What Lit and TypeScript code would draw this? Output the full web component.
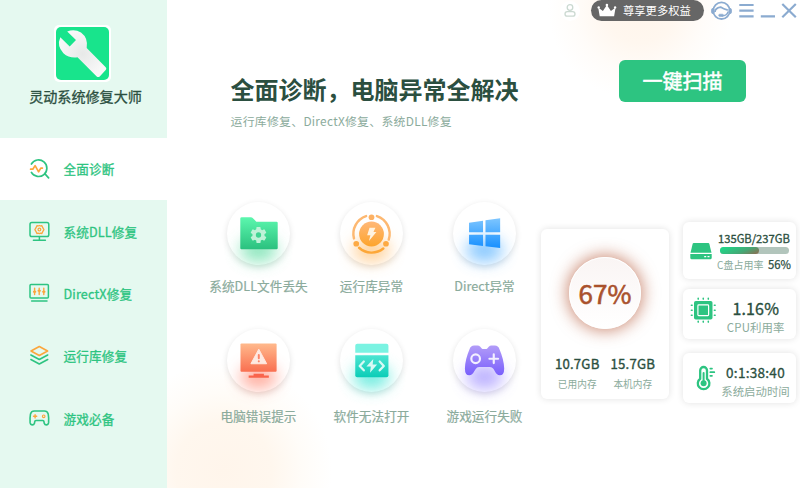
import { LitElement, html, css, svg, TemplateResult } from "lit";
import { customElement, property } from "lit/decorators.js";

const GREEN = "#2dc481";
const ORANGE = "#fba63c";

interface NavItem { label: string; icon: TemplateResult; active?: boolean }
interface Issue { label: string; glow: string; icon: TemplateResult }

const nav: NavItem[] = [
  {
    label: "全面诊断",
    active: true,
    icon: html`<svg viewBox="0 0 22 22"><g fill="none" stroke-width="1.7" stroke-linecap="round" stroke-linejoin="round">
      <path stroke=${GREEN} d="M3.400 6A8.300 8.300 0 1 1 3.400 14.400M17.200 16.200l3.400 3.600"/>
      <path stroke=${ORANGE} d="M2.600 11.200h2.200l2.300-3.600 3.500 6.200 2.200-3.700h1.600"/></g></svg>`,
  },
  {
    label: "系统DLL修复",
    icon: html`<svg viewBox="0 0 22 22"><g fill="none" stroke-width="1.5" stroke-linecap="round" stroke-linejoin="round">
      <rect x="2" y="1.600" width="18.800" height="14" rx="1.800" stroke=${GREEN}/>
      <path stroke=${GREEN} d="M11.400 16v3M5.400 19.200h12"/>
      <path stroke=${ORANGE} stroke-width="1.3" d="M8.900 4.700l1.200.3 1.300-.5 1.300.5 1.200-.3 1 2.200 1 1.700-1 1.700-1 2.200-1.200-.3-1.300.5-1.300-.5-1.200.3-1-2.200-1-1.700 1-1.700z"/>
      <circle cx="11.400" cy="8.600" r="1.400" stroke=${ORANGE} stroke-width="1.2"/></g></svg>`,
  },
  {
    label: "DirectX修复",
    icon: html`<svg viewBox="0 0 22 22"><g fill="none" stroke-width="1.5" stroke-linecap="round" stroke-linejoin="round">
      <rect x="2" y="1.600" width="18.400" height="13.400" rx="1" stroke=${GREEN}/>
      <path stroke=${GREEN} d="M3.600 18h15.400"/>
      <g stroke=${ORANGE} stroke-width="1.400"><path d="M6.600 5.200v6.300M11.200 5.200v6.300M15.800 5.200v6.300"/>
      <path stroke-width="2" d="M5.900 8.700h1.400M10.500 7.700h1.400M15.100 8.700h1.400"/></g></g></svg>`,
  },
  {
    label: "运行库修复",
    icon: html`<svg viewBox="0 0 22 22"><g fill="none" stroke-width="1.6" stroke-linecap="round" stroke-linejoin="round">
      <path stroke=${ORANGE} d="M11.300 1.500l8.300 4.500-8.300 4.500-8.300-4.500z"/>
      <path stroke=${GREEN} d="M2.900 10l8.400 4.500 8.400-4.500M2.900 14.500l8.400 4.500 8.400-4.500"/></g></svg>`,
  },
  {
    label: "游戏必备",
    icon: html`<svg viewBox="0 0 22 22"><g fill="none" stroke-width="1.6" stroke-linecap="round" stroke-linejoin="round">
      <path stroke=${GREEN} d="M6.300 3h10.100q2.900 0 3.800 2.900.8 4.600.4 8.800-.4 2.200-2.300 2.200-1.500 0-2.100-1.700-.1-2.700-1.500-2.700H8q-1.400 0-1.500 2.700-.6 1.700-2.100 1.700-1.900 0-2.300-2.200-.4-4.200.4-8.800Q3.400 3 6.300 3z"/>
      <path stroke=${ORANGE} stroke-width="1.4" d="M7.100 6.700v3.200M5.500 8.300h3.200"/>
      <circle cx="15.700" cy="8.300" r="1.300" stroke=${ORANGE} stroke-width="1.1"/></g></svg>`,
  },
];

const fade = (id: string, from: string, to: string) => svg`<defs><linearGradient id=${id} x1="0" y1="0" x2="0" y2="1">
  <stop offset="0" stop-color=${from}/><stop offset="1" stop-color=${to}/></linearGradient></defs>`;

/* Issue icons share a 64-unit square, the size of the disc they sit on. */
const issues: Issue[] = [
  {
    label: "系统DLL文件丢失",
    glow: "#6fe0ac",
    icon: html`<svg viewBox="0 0 64 64">${fade("folder", "#5cf7ae", "#2bc17f")}
      <path fill="url(#folder)" d="M15 15.500h9.500q.8 0 1.300.5l4 4h20.500q1.200 0 1.200 1.200v25.500q0 1.200-1.200 1.200H14.700q-1.200 0-1.200-1.200V16.700q0-1.200 1.500-1.200z"/>
      <g transform="translate(32 33.500)" fill="#bff2d8">
        ${[0, 60, 120].map((a) => svg`<rect x="-2.200" y="-8.100" width="4.400" height="16.200" rx=".8" transform=${`rotate(${a})`}/>`)}
        <circle r="6.200"/><circle r="2.700" fill="#40d492"/></g></svg>`,
  },
  {
    label: "运行库异常",
    glow: "#ffc680",
    icon: html`<svg viewBox="0 0 64 64">${fade("orbit", "#ffb878", "#fda42c")}
      <circle cx="32" cy="32.500" r="12.600" fill="url(#orbit)"/>
      <g fill="none" stroke-width="2.500" stroke-linecap="round">
        <path stroke="#fdb871" d="M37.500 14.300A19 19 0 0 1 49.500 38.200M26.500 14.300A19 19 0 0 0 14.200 37"/>
        <path stroke="#fda737" d="M19.400 46.500A19 19 0 0 0 44 47.300"/></g>
      <circle cx="32" cy="15.500" r="2.900" fill="#fdb163"/><circle cx="16.500" cy="42.400" r="2.900" fill="#fdaa43"/><circle cx="46.700" cy="42.400" r="2.900" fill="#fdaa43"/>
      <path fill="#fff3e0" d="M30 26.200h6l-2 4.300h3l-7.600 9.200 1.500-6h-3.300z"/></svg>`,
  },
  {
    label: "Direct异常",
    glow: "#69baff",
    icon: html`<svg viewBox="0 0 64 64"><defs><linearGradient id="panes" gradientUnits="userSpaceOnUse" x1="0" y1="17" x2="0" y2="47">
      <stop offset="0" stop-color="#7cc5ff"/><stop offset="1" stop-color="#168fff"/></linearGradient></defs>
      <path fill="url(#panes)" d="M16.300 21l14.200-2v11.700H16.300zM33 18.600l14.900-2.100v14.200H33zM16.300 33.200h14.200v11.400l-14.200-1.800zM33 33.200h14.900v13.600L33 44.900z"/></svg>`,
  },
  {
    label: "电脑错误提示",
    glow: "#ff9a88",
    icon: html`<svg viewBox="0 0 64 64">${fade("screen", "#ffb98c", "#f96f50")}
      <rect x="13.700" y="14.700" width="36.700" height="28.800" rx="1" fill="url(#screen)"/>
      <path fill="#f9644c" d="M27 45.500H37.500v1.700h5v2.300H22v-2.300h5z"/>
      <path fill="#fee9e1" stroke="#fee9e1" stroke-linejoin="round" d="M32.300 20.500l8 14.800h-16z"/>
      <path stroke="#fc8468" stroke-width="2" stroke-linecap="round" d="M32.300 26.500v3.300M32.300 32.800v.1"/></svg>`,
  },
  {
    label: "软件无法打开",
    glow: "#4fe8d8",
    icon: html`<svg viewBox="0 0 64 64">${fade("window", "#4ce5d2", "#0bcdb7")}
      <path fill="#7af3e2" d="M17.500 15h29.700q2 0 2 2v7.200H15.500V17q0-2 2-2z"/>
      <path fill="url(#window)" d="M15.500 26.700h33.700v20.300q0 2-2 2H17.500q-2 0-2-2z"/>
      <g fill="none" stroke="#d8faf5" stroke-width="2.300" stroke-linecap="round" stroke-linejoin="round">
      <path d="M24.200 33L20 37.500l4.200 4.500M40.300 33l4.200 4.500-4.200 4.500"/></g>
      <path fill="#d8faf5" d="M33.800 30.500l-.6 5.500h4.500l-7.200 8.500.8-6.500h-4.500z"/></svg>`,
  },
  {
    label: "游戏运行失败",
    glow: "#a89aff",
    icon: html`<svg viewBox="0 0 64 64">${fade("pad", "#b29cf8", "#795ffc")}
      <path fill="url(#pad)" d="M21.500 16.800h3.500q1.500 0 2.700 1.200l1.500 1.700q.7.700 1.600.7h2.400q.9 0 1.600-.7l1.500-1.700q1.200-1.200 2.700-1.200h3.500q3.500 0 4.700 3.700Q51.700 31 52 40q0 7-4.500 7-3 0-5-4l-1.300-2.400Q39.700 38.700 37.500 38.700h-11q-2.200 0-3.600 2.100L21.600 43q-2 4-5 4-4.500 0-4.500-7 .2-9 4.700-19.500 1.200-3.700 4.700-3.700z"/>
      <g fill="none" stroke="#f3efff" stroke-width="2.200"><circle cx="23" cy="30.200" r="4.400"/>
      <path stroke-linecap="round" d="M41.400 25.800v8.800M37 30.200h8.800"/></g></svg>`,
  },
];

const driveIcon = html`<svg viewBox="0 0 26 26"><path fill=${GREEN} d="M5.700 5h14.600q.8 0 1 .8l2.200 9H2.500l2.200-9q.2-.8 1-.8z"/>
  <path fill=${GREEN} d="M2.300 16h21.400v4.100q0 1.100-1.100 1.100H3.400q-1.100 0-1.100-1.100z"/><path stroke="#fff" stroke-width="1.300" d="M16.200 18.600h2M19.500 18.600h2"/></svg>`;

const chipIcon = html`<svg viewBox="0 0 26 26"><rect x="4" y="4" width="18.500" height="18.500" rx="1.800" fill=${GREEN}/>
  <rect x="7.900" y="7.900" width="10.700" height="10.700" rx=".8" fill="none" stroke="#fff" stroke-width="1.200"/>
  <path stroke=${GREEN} stroke-width="1.600" stroke-linecap="round" d="M8.200 1.400v.7M13.250 1.400v.7M18.300 1.400v.7M8.200 24.400v.7M13.250 24.400v.7M18.300 24.400v.7M1.400 8.200h.7M1.400 13.250h.7M1.400 18.300h.7M24.400 8.200h.7M24.400 13.250h.7M24.400 18.300h.7"/></svg>`;

const thermoIcon = html`<svg viewBox="0 0 26 26"><g fill="none" stroke=${GREEN} stroke-linecap="round">
  <path stroke-width="2.300" d="M7.200 13.700V5.400a3.400 3.400 0 0 1 6.800 0v8.300a5.800 5.800 0 1 1-6.800 0z"/>
  <path stroke-width="2" d="M10.600 8v8"/><path stroke-width="1.700" d="M17.300 3.600h1.700M17.300 7.200h4M17.300 10.800h1.700"/></g>
  <circle cx="10.600" cy="18.200" r="3" fill=${GREEN}/></svg>`;

@customElement("nav-entry")
class NavEntry extends LitElement {
  @property({ attribute: false }) item!: NavItem;
  static styles = css`
    :host { display: block; }
    .entry { box-sizing: border-box; height: 62.3px; padding: 1.500px 0 0 28px; display: flex; align-items: center; }
    .active { background: #fff; }
    .icon { width: 22px; height: 22px; margin-right: 13.500px; }
    .icon svg { display: block; width: 22px; height: 22px; }
    .label { font-size: 12.600px; letter-spacing: .15px; -webkit-text-stroke: .3px currentColor; color: #2dc481; line-height: 20px; white-space: nowrap; }
  `;
  render() {
    const { label, icon, active } = this.item;
    return html`<div class="entry ${active ? "active" : ""}"><span class="icon">${icon}</span><span class="label">${label}</span></div>`;
  }
}

@customElement("issue-tile")
class IssueTile extends LitElement {
  @property({ attribute: false }) issue!: Issue;
  @property({ type: Boolean }) low = false;
  static styles = css`
    :host { display: block; }
    .tile { display: flex; flex-direction: column; align-items: center; }
    .disc { position: relative; width: 63px; height: 63px; border-radius: 50%; background: #fff;
      box-shadow: 0 2px 6px rgba(0, 0, 0, .12); }
    .glow { position: absolute; left: 13px; top: 36px; width: 37px; height: 24px; border-radius: 50%; filter: blur(8px); opacity: .8; }
    .disc svg { position: relative; display: block; width: 63px; height: 63px; }
    .label { margin-top: 12.500px; font-size: 12.600px; letter-spacing: .06px; line-height: 18px; color: #8bab9c; -webkit-text-stroke: .2px currentColor; white-space: nowrap; }
    .low { margin-top: 15.500px; }
  `;
  render() {
    return html`<div class="tile"><div class="disc"><div class="glow" style="background:${this.issue.glow}"></div>${this.issue.icon}</div>
      <div class="label ${this.low ? "low" : ""}">${this.issue.label}</div></div>`;
  }
}

@customElement("app-root")
class AppRoot extends LitElement {
  static styles = css`
    :host { display: block; font-family: "Noto Sans CJK SC", sans-serif; color: #2b4f40; }
    svg { display: block; }
    .window { width: 800px; height: 488px; display: flex; overflow: hidden; background: #fff; }
    .side { width: 167px; flex: none; background: #e5f9f0; }
    .brand { height: 137.500px; box-sizing: border-box; padding-top: 24.500px; display: flex; flex-direction: column; align-items: center; }
    .logo { width: 57px; height: 57px; margin-left: -3px; }
    .name { margin-top: 3.500px; margin-left: 4px; font-size: 14.100px; line-height: 22px; -webkit-text-stroke: .3px currentColor; }
    .main { flex: 1; background:
      radial-gradient(circle at 473px 8px, #fff5eb 0, #fff7ef 35px, #fffcf9 65px, #fff 92px) 0 0 / 100% 125px no-repeat,
      radial-gradient(circle at 57px 470px, #fff5eb 0, #fff7ee 48px, #fffcf8 78px, #fff 108px); }
    .bar { height: 22px; display: flex; justify-content: flex-end; }
    .user { width: 20px; height: 20px; margin: 1px 11.500px 0 0; border-radius: 50%; background: #fff; }
    .vip { box-sizing: border-box; width: 113px; height: 21px; padding-left: 6px; border-radius: 10.500px; background: #666;
      display: flex; align-items: center; color: #fff; font-size: 11.300px; line-height: 19px; padding-bottom: 1px; }
    .vip svg { margin-right: 6px; }
    .controls { width: 96px; height: 22px; }
    .hero { height: 179.500px; display: flex; }
    .copy { padding: 52px 0 0 63.500px; }
    h1 { margin: 0; font-size: 24px; line-height: 30px; font-weight: 700; }
    .sub { margin-top: 8px; font-size: 11.900px; letter-spacing: .26px; line-height: 18px; color: #8bab9c; }
    .scan { width: 127px; height: 42px; margin: 38px 54px 0 auto; border: 0; padding: 0; border-radius: 6px; background: #2dc481; color: #fff;
      font: 400 20px/42px "Noto Sans CJK SC", sans-serif; -webkit-text-stroke: .5px currentColor; }
    .body { display: flex; align-items: flex-start; padding-left: 35px; }
    .issues { display: grid; grid-template-columns: repeat(3, 113px); grid-auto-rows: 127px; }
    .card { box-sizing: border-box; background: #fff; border-radius: 6px; box-shadow: 0 0 7px rgba(0, 0, 0, .12); }
    .memory { width: 128px; height: 170px; margin: 27.500px 14px 0 0; padding-top: 28px; }
    .ring { width: 72px; height: 72px; margin: 0 auto; border-radius: 50%; text-align: center; font-size: 26px; line-height: 70px; color: #a9512c;
      -webkit-text-stroke: .6px currentColor;
      background: linear-gradient(#faf5f4, #fff); border: 1px solid #fff; box-sizing: border-box; box-shadow: 0 0 16px 2px rgba(178, 82, 48, .65); }
    .split { display: flex; justify-content: center; gap: 11px; margin-top: 25px; }
    .split div { text-align: center; }
    .amount { font-size: 13.200px; line-height: 20px; letter-spacing: .2px; -webkit-text-stroke: .35px currentColor; }
    .hint { font-size: 9.700px; line-height: 20px; color: #8bab9c; }
    .stats { display: flex; flex-direction: column; margin-top: 20.500px; }
    .stat { width: 113px; height: 50px; display: flex; }
    .disk { height: 57px; margin-bottom: 10px; }
    .cpu { margin-bottom: 14px; }
    .pic { width: 26px; height: 26px; flex: none; }
    .disk .pic { margin: 15.500px 3.500px 0 4.500px; }
    .cpu .pic { margin: 8px 0 0 6.500px; }
    .up .pic { margin: 12px 0 0 9.500px; }
    .text { text-align: center; white-space: nowrap; }
    .used { font-size: 11.200px; line-height: 17px; margin-top: 8px; -webkit-text-stroke: .3px currentColor; }
    .track { width: 69px; height: 7px; border-radius: 4px; background: #b2c5bc; margin-left: 3px; }
    .fill { height: 7px; border-radius: 4px; background: linear-gradient(155deg, #19df8c, #45a875 60%, #926a50); }
    .rate { font-size: 10px; line-height: 18px; margin-top: 1px; color: #8bab9c; }
    .rate b { font-size: 11.300px; font-weight: 400; color: #2b4f40; margin-left: 4.500px; -webkit-text-stroke: .25px currentColor; }
    .cpu .text { width: 81px; padding-top: 9px; }
    .big { font-size: 16px; line-height: 20px; letter-spacing: .15px; -webkit-text-stroke: .35px currentColor; }
    .cap { font-size: 11.400px; line-height: 19px; color: #8bab9c; }
    .cpu .cap { letter-spacing: .15px; }
    .up .text { width: 74px; padding-top: 8.500px; }
    .time { font-size: 13.500px; line-height: 20px; letter-spacing: .3px; -webkit-text-stroke: .3px currentColor; }
  `;

  render() {
    const diskUsed = 56;
    return html`<div class="window">
      <aside class="side">
        <div class="brand">
          <svg class="logo" viewBox="0 0 57 57"><defs><radialGradient id="steel"><stop offset="0" stop-color="#e7e9e8"/><stop offset="1" stop-color="#f8f8f8"/></radialGradient></defs>
            <rect width="57" height="57" rx="5" fill="#fff"/><rect x="2" y="2" width="53" height="53" rx="5" fill="#18e48c"/>
            <path fill="url(#steel)" d="M13.200 6.400Q20.500 3.600 27 7.400q7.400 5.500 5.700 15.500l19 19.400q1.300 1.400 0 2.800l-6 6.300q-1.500 1.400-3 0L23.500 32.300Q15.300 33.500 9.400 28.200 2.500 21 6.300 12.300l9.400 9.200 6.300-6.400z"/></svg>
          <div class="name">灵动系统修复大师</div>
        </div>
        ${nav.map((item) => html`<nav-entry .item=${item}></nav-entry>`)}
      </aside>
      <main class="main">
        <div class="bar">
          <div class="user"><svg width="20" height="20" viewBox="0 0 20 20" fill="none" stroke="#cbd9d1" stroke-width="1.300"><circle cx="10" cy="6.500" r="2.800"/><rect x="5" y="10.600" width="10" height="4.600" rx="2.300"/></svg></div>
          <div class="vip"><svg width="20" height="16" viewBox="0 0 20 16"><path fill="#fff" d="M1.200 5.500l4.700 3.400L9.900 3l4 5.900 4.700-3.400-1.500 8.800H2.700z"/><g fill="#fff"><circle cx="1.700" cy="5.400" r="1.200"/><circle cx="9.900" cy="3" r="1.300"/><circle cx="18.100" cy="5.400" r="1.200"/></g></svg>尊享更多权益</div>
          <svg class="controls" viewBox="0 0 96 22" fill="none" stroke="#8babd0" stroke-width="1.800">
            <circle cx="17.500" cy="10.700" r="8.300" stroke-width="1.800"/>
            <path stroke-width="1.800" d="M11 12q0-4 5.500-4.900 3 2 7.300 3"/><path stroke-width="1.500" d="M24 11.500q-.5 4.300-6.500 4.300"/>
            <rect x="7.700" y="8.500" width="2.300" height="5" rx="1" fill="#8babd0" stroke-width="1"/><rect x="25" y="8.500" width="2.300" height="5" rx="1" fill="#8babd0" stroke-width="1"/>
            <rect x="14.700" y="14.200" width="4.800" height="2.200" rx="1" fill="#8babd0" stroke-width=".6"/>
            <path stroke-width="2.200" d="M35.300 5h14.300M35.300 10.700h14.300M35.300 16.400h14.300M56.800 16.400H71"/>
            <path stroke-width="2.200" d="M78.300 4l13.500 13.200M91.800 4L78.300 17.200"/></svg>
        </div>
        <section class="hero">
          <div class="copy"><h1>全面诊断，电脑异常全解决</h1><div class="sub">运行库修复、DirectX修复、系统DLL修复</div></div>
          <button class="scan">一键扫描</button>
        </section>
        <section class="body">
          <div class="issues">${issues.map((issue, i) => html`<issue-tile .issue=${issue} ?low=${i > 2}></issue-tile>`)}</div>
          <div class="card memory">
            <div class="ring">67%</div>
            <div class="split">
              <div><div class="amount">10.7GB</div><div class="hint">已用内存</div></div>
              <div><div class="amount">15.7GB</div><div class="hint">本机内存</div></div>
            </div>
          </div>
          <div class="stats">
            <div class="card stat disk"><div class="pic">${driveIcon}</div>
              <div class="text"><div class="used">135GB/237GB</div>
                <div class="track"><div class="fill" style="width:${diskUsed}%"></div></div>
                <div class="rate">C盘占用率<b>${diskUsed}%</b></div></div></div>
            <div class="card stat cpu"><div class="pic">${chipIcon}</div>
              <div class="text"><div class="big">1.16%</div><div class="cap">CPU利用率</div></div></div>
            <div class="card stat up"><div class="pic">${thermoIcon}</div>
              <div class="text"><div class="time">0:1:38:40</div><div class="cap">系统启动时间</div></div></div>
          </div>
        </section>
      </main>
    </div>`;
  }
}
